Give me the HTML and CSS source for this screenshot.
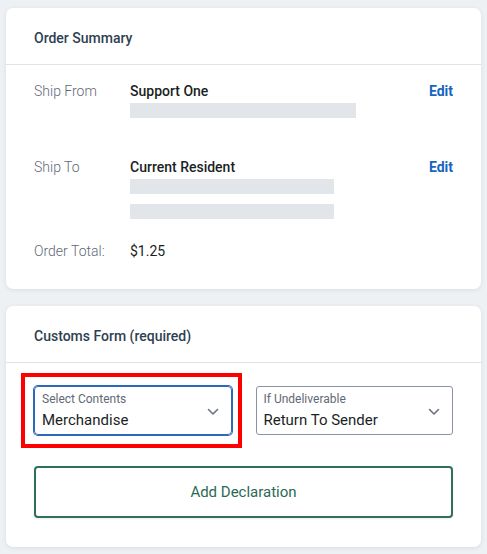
FILE: index.html
```html
<!DOCTYPE html>
<html>
<head>
<meta charset="utf-8">
<link rel="stylesheet" href="styles.css">
</head>
<body>
<div class="page">
  <section class="card">
    <div class="card-header">Order Summary</div>
    <div class="card-body summary">
      <div class="row row-from">
        <div class="label">Ship From</div>
        <div class="value">
          <div class="name">Support One</div>
          <div class="bar bar-wide"></div>
        </div>
        <a class="edit">Edit</a>
      </div>
      <div class="row row-to">
        <div class="label">Ship To</div>
        <div class="value">
          <div class="name">Current Resident</div>
          <div class="bar"></div>
          <div class="bar bar-second"></div>
        </div>
        <a class="edit">Edit</a>
      </div>
      <div class="row row-total">
        <div class="label">Order Total:</div>
        <div class="value"><div class="amount">$1.25</div></div>
      </div>
    </div>
  </section>

  <section class="card">
    <div class="card-header">Customs Form (required)</div>
    <div class="card-body customs">
      <div class="selects">
        <div class="select focused">
          <div class="select-label">Select Contents</div>
          <div class="select-value">Merchandise</div>
          <svg class="chevron" viewBox="0 0 12 8" width="12" height="8"><path d="M1.5 1.5 L6 6 L10.5 1.5" fill="none" stroke="#6b7380" stroke-width="1.6" stroke-linecap="round" stroke-linejoin="round"/></svg>
          <div class="highlight"></div>
        </div>
        <div class="select">
          <div class="select-label">If Undeliverable</div>
          <div class="select-value">Return To Sender</div>
          <svg class="chevron" viewBox="0 0 12 8" width="12" height="8"><path d="M1.5 1.5 L6 6 L10.5 1.5" fill="none" stroke="#6b7380" stroke-width="1.6" stroke-linecap="round" stroke-linejoin="round"/></svg>
        </div>
      </div>
      <button class="btn">Add Declaration</button>
    </div>
  </section>
</div>
</body>
</html>
```

FILE: styles.css
```css
* { box-sizing: border-box; }
html, body { margin: 0; padding: 0; }
body {
  background: #eef1f4;
  font-family: Roboto, "Liberation Sans", sans-serif;
  color: #1b1f24;
}
.page {
  padding: 8px 6px;
  display: flex;
  flex-direction: column;
  gap: 17px;
}
.card {
  background: #fff;
  border-radius: 7px;
  box-shadow: 0 1px 4px rgba(30, 40, 60, 0.10);
}
.card-header {
  height: 57px;
  display: flex;
  align-items: center;
  padding: 4px 28px 0;
  font-size: 14px;
  font-weight: 500;
  color: #2e3f52;
  border-bottom: 1px solid #dfe3e8;
}
.card-body { padding: 0 28px; }
.summary { padding-top: 16px; padding-bottom: 28px; }
.row {
  display: grid;
  grid-template-columns: 96px 1fr auto;
  font-size: 14px;
  line-height: 20px;
}
.label { color: #5f6976; font-weight: 300; }
.name { font-weight: 500; color: #1b1f24; }
.amount { color: #1b1f24; }
.edit { color: #1565c0; font-weight: 700; cursor: pointer; }
.bar {
  height: 15px;
  width: 204px;
  background: #e2e5e9;
  margin-top: 2px;
}
.bar-wide { width: 226px; }
.bar-second { margin-top: 10px; }
.row-to { margin-top: 39px; }
.row-total { margin-top: 22px; }

.customs { padding-top: 23px; padding-bottom: 29px; }
.selects {
  display: grid;
  grid-template-columns: 1fr 1fr;
  gap: 24px;
}
.select {
  position: relative;
  height: 49px;
  border: 1px solid #8a93a3;
  border-radius: 3px;
  padding: 5px 0 0 7px;
}
.select.focused {
  border-color: #2c6ab9;
  box-shadow: 0 0 0 1px #2c6ab9;
  border-radius: 4px;
}
.select-label {
  font-size: 12px;
  line-height: 14px;
  color: #5f6976;
}
.select-value {
  font-size: 15px;
  line-height: 20px;
  margin-top: 4px;
  color: #1b1f24;
}
.chevron {
  position: absolute;
  right: 12px;
  top: 21px;
}
.highlight {
  position: absolute;
  top: -14px;
  left: -14px;
  right: -11px;
  bottom: -14px;
  border: 4px solid #ff0000;
  pointer-events: none;
}
.btn {
  display: block;
  width: 100%;
  height: 52px;
  margin-top: 31px;
  background: #fff;
  border: 2px solid #2f6f5c;
  border-radius: 4px;
  font-family: Roboto, "Liberation Sans", sans-serif;
  font-size: 15px;
  color: #2a6a55;
  box-shadow: 0 1px 2px rgba(0,0,0,0.08);
}
```
